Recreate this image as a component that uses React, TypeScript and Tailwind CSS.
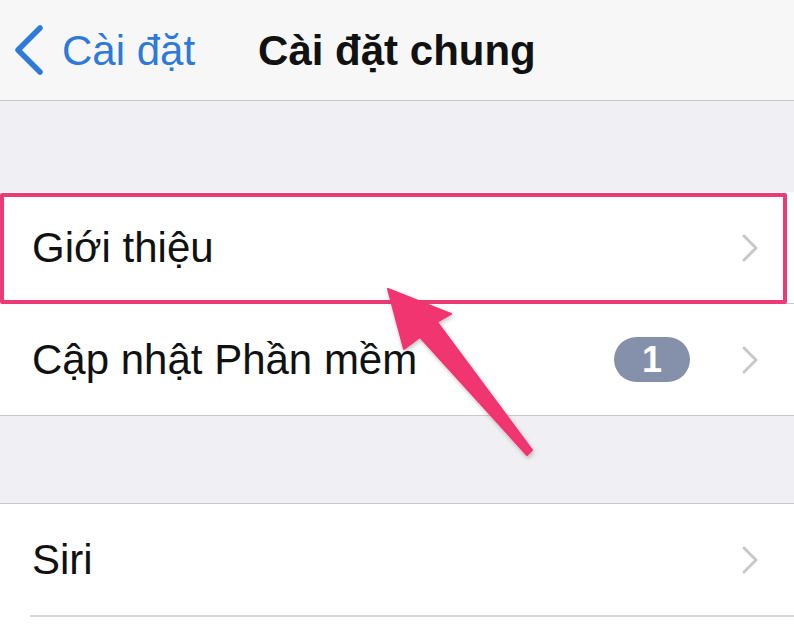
const font = { fontFamily: '"Liberation Sans", Arial, sans-serif' };

const Chevron = () => (
  <svg width="20" height="30" viewBox="0 0 20 30" className="shrink-0">
    <path d="M4 3 L16 15 L4 27" fill="none" stroke="#c7c7cc" strokeWidth="3" strokeLinecap="round" strokeLinejoin="round" />
  </svg>
);

const Row = ({ label, badge }: { label: string; badge?: string }) => (
  <div className="flex items-center h-[111px] pl-[32px] pr-[34px] bg-white">
    <span className="flex-1 text-[42px] text-[#111]">{label}</span>
    {badge && (
      <span className="mr-[50px] flex items-center justify-center w-[76px] h-[45px] rounded-full bg-[#8591ab] text-white text-[36px] font-bold">
        {badge}
      </span>
    )}
    <Chevron />
  </div>
);

export default function App() {
  return (
    <div className="relative w-[794px] h-[626px] overflow-hidden bg-white" style={font}>
      {/* Nav bar */}
      <div className="flex items-center h-[101px] bg-[#f7f7f7] border-b border-[#c8c7cc] pl-[12px]">
        <svg width="34" height="50" viewBox="0 0 34 50" className="shrink-0">
          <path d="M28 3 L6 25 L28 47" fill="none" stroke="#2f7ad8" strokeWidth="5.5" strokeLinecap="round" strokeLinejoin="round" />
        </svg>
        <span className="ml-[16px] text-[42px] text-[#2f7ad8]">Cài đặt</span>
        <span className="ml-[63px] text-[42px] font-semibold text-[#111]">Cài đặt chung</span>
      </div>

      <div className="h-[91px] bg-[#efeff4]" />

      <div className="relative border-b border-[#c8c7cc]">
        <Row label="Giới thiệu" />
        <div className="ml-[32px] border-b border-[#c8c7cc]" />
        <Row label="Cập nhật Phần mềm" badge="1" />
        {/* highlight box */}
        <div className="absolute left-0 top-[1px] w-[787px] h-[111px] border-4 border-[#ec3b74] rounded-[2px]" />
      </div>

      <div className="h-[88px] bg-[#efeff4] border-b border-[#c8c7cc]" />

      <div className="bg-white">
        <Row label="Siri" />
        <div className="ml-[30px] border-b-2 border-[#d6d6da]" />
      </div>

      {/* annotation arrow */}
      <svg className="absolute left-0 top-0 pointer-events-none" width="794" height="626" viewBox="0 0 794 626">
        <defs>
          <filter id="sh" x="-20%" y="-20%" width="140%" height="140%">
            <feDropShadow dx="1" dy="2" stdDeviation="2" floodColor="#000" floodOpacity="0.25" />
          </filter>
        </defs>
        <path
          d="M388 289 L451 314 L437 322 L532 450 L527 455 L420 337 L404 349 Z"
          fill="#f1346f"
          stroke="#f1346f"
          strokeWidth="2"
          strokeLinejoin="round"
          filter="url(#sh)"
        />
      </svg>
    </div>
  );
}
